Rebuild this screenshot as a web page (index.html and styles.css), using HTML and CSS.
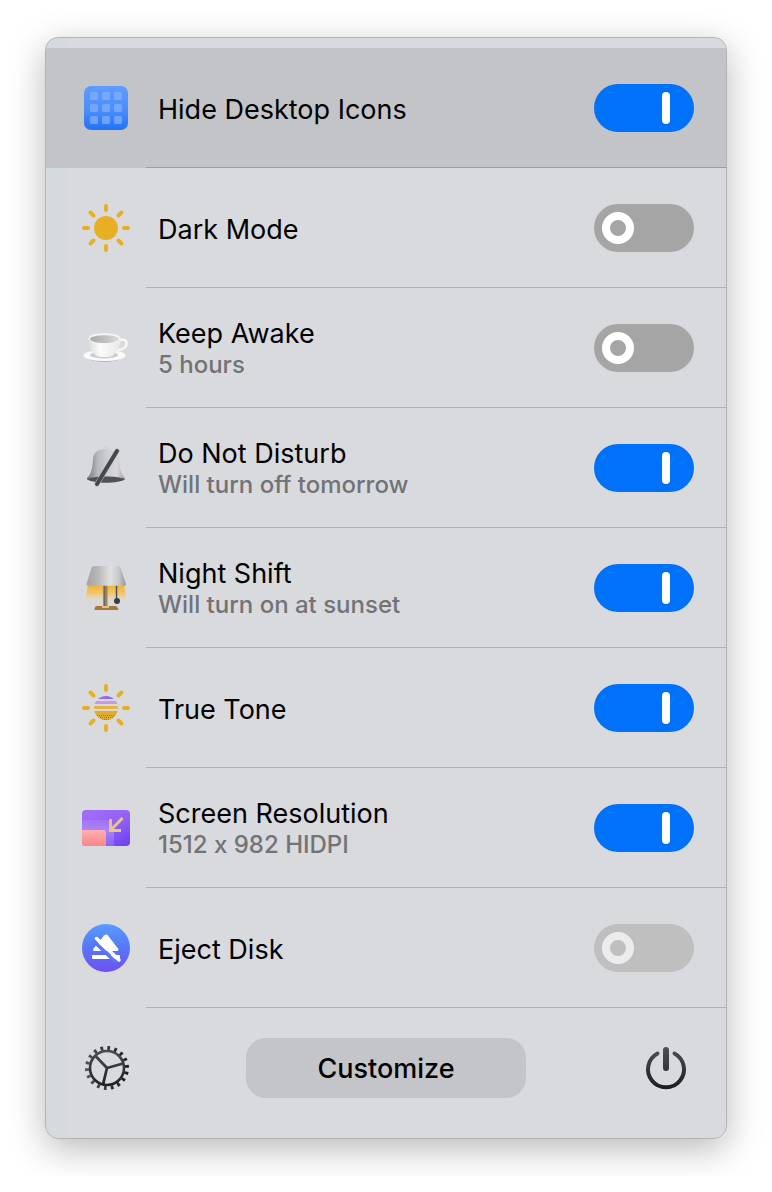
FILE: index.html
```html
<!DOCTYPE html>
<html lang="en">
<head>
  <meta charset="UTF-8" />
  <meta name="viewport" content="width=device-width, initial-scale=1.0"/>
  <title>Quick Switches</title>
  <link rel="stylesheet" href="styles.css">
</head>
<body>

<main class="panel">
  <ul class="switches">
    <li class="row active">
      <svg class="icon" viewBox="0 0 48 48" aria-hidden="true">
        <defs>
          <linearGradient id="desk" x1="0" y1="0" x2="0" y2="1"><stop offset="0" stop-color="#609cff"/><stop offset=".55" stop-color="#4a8dfb"/><stop offset="1" stop-color="#2273f5"/></linearGradient>
        </defs>
        <rect x="2" y="2" width="44" height="44" rx="7" fill="url(#desk)"/>
        <g fill="#82b1ff" opacity=".72">
          <rect x="8" y="8" width="8" height="8" rx="1.5"/><rect x="20" y="8" width="8" height="8" rx="1.5"/><rect x="32" y="8" width="8" height="8" rx="1.5"/>
          <rect x="8" y="20" width="8" height="8" rx="1.5"/><rect x="20" y="20" width="8" height="8" rx="1.5"/><rect x="32" y="20" width="8" height="8" rx="1.5"/>
          <rect x="8" y="32" width="8" height="8" rx="1.5"/><rect x="20" y="32" width="8" height="8" rx="1.5"/><rect x="32" y="32" width="8" height="8" rx="1.5"/>
        </g>
      </svg>
      <div class="row-body">
        <label class="text" for="desktop"><span class="title">Hide Desktop Icons</span></label>
        <input class="toggle" type="checkbox" id="desktop" checked>
      </div>
    </li>

    <li class="row">
      <svg class="icon" viewBox="0 0 48 48" aria-hidden="true">
        <circle cx="24" cy="24" r="12" fill="#e8af24"/>
        <path d="M24 2v4M24 42v4M2 24h4M42 24h4M8.5 8.5l3 3M36.5 36.5l3 3M39.5 8.5l-3 3M11.5 36.5l-3 3" stroke="#e8af24" stroke-width="4" stroke-linecap="round"/>
      </svg>
      <div class="row-body">
        <label class="text" for="dark"><span class="title">Dark Mode</span></label>
        <input class="toggle" type="checkbox" id="dark">
      </div>
    </li>

    <li class="row">
      <svg class="icon" viewBox="0 0 48 48" aria-hidden="true">
        <defs>
          <linearGradient id="cupin" x1="0" y1="0" x2="1" y2="0"><stop offset="0" stop-color="#a9a9a9"/><stop offset=".6" stop-color="#c4c4c4"/><stop offset="1" stop-color="#dedede"/></linearGradient>
          <linearGradient id="cupout" x1="0" y1="0" x2="1" y2="0"><stop offset="0" stop-color="#dcdcdc"/><stop offset=".35" stop-color="#fbfbfb"/><stop offset="1" stop-color="#e9e9e9"/></linearGradient>
        </defs>
        <ellipse cx="22.5" cy="33" rx="17" ry="5" fill="#b4b4b6"/>
        <ellipse cx="22.5" cy="31.5" rx="21" ry="5.5" fill="#fafafa"/>
        <ellipse cx="22" cy="31" rx="14" ry="3.5" fill="#cfcfd0"/>
        <path d="M37 17c4-3 8-1 7.500 3-.5 4-4.500 6-9 6" fill="none" stroke="#f8f8f8" stroke-width="2.5"/>
        <path d="M6.500 14c0 8 3 14 8 17.500 3 2 13 2 16 0 5-3.500 8-9.500 8-17.500z" fill="url(#cupout)"/>
        <ellipse cx="22.5" cy="14.5" rx="16" ry="5.5" fill="#f4f4f4"/>
        <path d="M8 15c1-5 28-5 29 0-1 3-7 4-14.500 4S9 18 8 15z" fill="url(#cupin)"/>
      </svg>
      <div class="row-body">
        <label class="text" for="awake"><span class="title">Keep Awake</span><span class="note">5 hours</span></label>
        <input class="toggle" type="checkbox" id="awake">
      </div>
    </li>

    <li class="row">
      <svg class="icon" viewBox="0 0 48 48" aria-hidden="true">
        <defs>
          <linearGradient id="bell" x1="0" y1="0" x2="1" y2="0"><stop offset="0" stop-color="#777"/><stop offset=".28" stop-color="#b5b8bd"/><stop offset=".55" stop-color="#cfd0d2"/><stop offset=".8" stop-color="#d8d8d8"/><stop offset="1" stop-color="#9a9a9a"/></linearGradient>
        </defs>
        <circle cx="24" cy="5" r="3" fill="#d4d4d6"/>
        <path d="M24 5c8 0 12 3 13 9.500.7 8 1 15 6 19.500v1.500H5V34c5-4.500 5.300-11.500 6-19.500C12 8 16 5 24 5z" fill="url(#bell)"/>
        <path d="M5 35c7-3.500 31-3.500 38 0-5 5-33 5-38 0z" fill="#505154"/>
        <path d="M35 7L15 40" stroke="#b9bbbe" stroke-width="5" stroke-linecap="round"/>
        <path d="M35 7L15 40" stroke="#45474a" stroke-width="4" stroke-linecap="round"/>
      </svg>
      <div class="row-body">
        <label class="text" for="dnd"><span class="title">Do Not Disturb</span><span class="note">Will turn off tomorrow</span></label>
        <input class="toggle" type="checkbox" id="dnd" checked>
      </div>
    </li>

    <li class="row">
      <svg class="icon" viewBox="0 0 48 48" aria-hidden="true">
        <defs>
          <linearGradient id="shade" x1="0" y1="0" x2="1" y2="0"><stop offset="0" stop-color="#a4a4a5"/><stop offset=".3" stop-color="#b8b8b9"/><stop offset=".6" stop-color="#e0e0e1"/><stop offset=".8" stop-color="#cbcbcc"/><stop offset="1" stop-color="#979798"/></linearGradient>
          <linearGradient id="glow" x1="0" y1="0" x2="0" y2="1"><stop offset="0" stop-color="#f0b234"/><stop offset=".5" stop-color="#f2c56b"/><stop offset="1" stop-color="#ebd6ad" stop-opacity=".15"/></linearGradient>
        </defs>
        <path d="M6 21h36l3 16H3z" fill="url(#glow)"/>
        <path d="M21.500 21h4v22h-4z" fill="#a77f46"/>
        <path d="M21.500 21h1.500v22h-1.500z" fill="#67686a"/>
        <path d="M15 42h18c2 0 3 2 3.500 4h-24c0-2 .5-4 2.500-4z" fill="#a57738"/>
        <path d="M20 42h7v2h-7z" fill="#e1c18d"/>
        <path d="M34.500 20v16" stroke="#4e5054" stroke-width="1.5"/>
        <circle cx="35" cy="37" r="3" fill="#3a3c40"/>
        <path d="M12 2h24c1.300 0 2.300.7 2.600 2L44 20q.4 1.700-1.500 1.700H6q-1.900 0-1.500-1.700L9.400 4c.4-1.300 1.300-2 2.600-2z" fill="url(#shade)"/>
      </svg>
      <div class="row-body">
        <label class="text" for="night"><span class="title">Night Shift</span><span class="note">Will turn on at sunset</span></label>
        <input class="toggle" type="checkbox" id="night" checked>
      </div>
    </li>

    <li class="row">
      <svg class="icon" viewBox="0 0 48 48" aria-hidden="true">
        <defs>
          <clipPath id="disc"><circle cx="24" cy="24" r="12"/></clipPath>
        </defs>
        <g clip-path="url(#disc)">
          <path d="M12 12h24v3H12z" fill="#9668e8"/>
          <path d="M12 17h24v3H12z" fill="#c49bea"/>
          <path d="M12 22h24v3H12z" fill="#eab441"/>
          <path d="M12 27h24v9H12z" fill="#e2ad2a"/>
          <path d="M15 31.500h18M16 33.500h16M18 35.500h12" stroke="#957939" stroke-width="1" stroke-dasharray="1 1"/>
        </g>
        <path d="M24 2v4M24 42v4M2 24h4M42 24h4M8.5 8.5l3 3M36.5 36.5l3 3M39.5 8.5l-3 3M11.5 36.5l-3 3" stroke="#e8af24" stroke-width="4" stroke-linecap="round"/>
      </svg>
      <div class="row-body">
        <label class="text" for="tone"><span class="title">True Tone</span></label>
        <input class="toggle" type="checkbox" id="tone" checked>
      </div>
    </li>

    <li class="row">
      <svg class="icon" viewBox="0 0 48 48" aria-hidden="true">
        <defs>
          <linearGradient id="screen" x1=".2" y1="0" x2="1" y2="1"><stop offset="0" stop-color="#a36bfa"/><stop offset=".5" stop-color="#9161f5"/><stop offset="1" stop-color="#6c3df0"/></linearGradient>
          <linearGradient id="haze" x1="0" y1="0" x2="0" y2="1"><stop offset="0" stop-color="#b18cf8" stop-opacity=".3"/><stop offset=".4" stop-color="#b18cf8" stop-opacity=".8"/><stop offset="1" stop-color="#9a78ee" stop-opacity=".5"/></linearGradient>
          <linearGradient id="pink" x1="0" y1="0" x2="0" y2="1"><stop offset="0" stop-color="#ffafb0"/><stop offset="1" stop-color="#fd8589"/></linearGradient>
        </defs>
        <rect y="6" width="48" height="36" rx="4" fill="url(#screen)"/>
        <path d="M0 16h24q8 1 8 10v16H4q-4 0-4-4z" fill="url(#haze)"/>
        <path d="M0 26h21q3 0 3 3v13H4q-4 0-4-4z" fill="url(#pink)"/>
        <path d="M28.500 15v11.500H39M29 26L40.500 14" fill="none" stroke="#e9c881" stroke-width="2.8"/>
      </svg>
      <div class="row-body">
        <label class="text" for="resolution"><span class="title">Screen Resolution</span><span class="note">1512 x 982 HIDPI</span></label>
        <input class="toggle" type="checkbox" id="resolution" checked>
      </div>
    </li>

    <li class="row">
      <svg class="icon" viewBox="0 0 48 48" aria-hidden="true">
        <defs>
          <linearGradient id="eject" x1="0" y1="0" x2="0" y2="1"><stop offset="0" stop-color="#589bff"/><stop offset=".5" stop-color="#5677f7"/><stop offset="1" stop-color="#6f4ff0"/></linearGradient>
        </defs>
        <circle cx="24" cy="24" r="24" fill="url(#eject)"/>
        <path d="M22.300 11.300q1.700-1.600 3.400 0L36 24.500q1 2.500-1 2.500H12.500q-2.500 0-1-2.500z" fill="#fff"/>
        <rect x="10" y="31" width="28" height="4" rx="1" fill="#fff"/>
        <path d="M11.500 17L34 38.500" stroke="#5876f7" stroke-width="3.5"/>
        <path d="M14.500 14.500L37 36" stroke="#fff" stroke-width="3.5" stroke-linecap="round"/>
      </svg>
      <div class="row-body">
        <label class="text" for="disk"><span class="title">Eject Disk</span></label>
        <input class="toggle" type="checkbox" id="disk" disabled>
      </div>
    </li>
  </ul>

  <footer class="footer">
    <button class="icon-button" type="button" aria-label="Settings">
      <svg class="icon" viewBox="0 0 48 48" aria-hidden="true">
        <defs>
          <linearGradient id="ink" gradientUnits="userSpaceOnUse" x1="0" y1="3" x2="0" y2="45"><stop offset="0" stop-color="#505154"/><stop offset="1" stop-color="#1b1c1e"/></linearGradient>
        </defs>
        <g fill="none" stroke="url(#ink)">
          <circle cx="25" cy="24" r="17" stroke-width="2.6"/>
          <!-- 18 teeth, one every 20 degrees -->
          <circle cx="25" cy="24" r="20" stroke-width="4" pathLength="180" stroke-dasharray="4 6" transform="rotate(-89 25 24)"/>
          <path d="M25 24L13.500 12M25 24l16-4.500M25 24l-4 16.500" stroke-width="2.8"/>
        </g>
      </svg>
    </button>
    <button class="customize" type="button">Customize</button>
    <button class="icon-button" type="button" aria-label="Quit">
      <svg class="icon" viewBox="0 0 48 48" aria-hidden="true">
        <g fill="none" stroke="url(#ink)" stroke-linecap="round">
          <path d="M15.500 9.500a18 18 0 1 0 17 0" stroke-width="4"/>
          <path d="M24 6L24.010 24" stroke-width="6"/>
        </g>
      </svg>
    </button>
  </footer>
</main>

</body>
</html>
```
FILE: styles.css
```css
*, *::before { box-sizing: border-box; margin: 0; padding: 0; font-family: Inter, 'Liberation Sans', sans-serif; }
body { background-color: #fff; color: #000; padding: 37px 45px; }
.panel { padding-top: 10px; border: 1px solid #b2b3b5; border-radius: 13px; background: linear-gradient(90deg, #d5dadd 22px, #d9dade 22px); box-shadow: 0 10px 36px rgba(0, 0, 0, 0.28); overflow: hidden; }

.switches { list-style: none; }
.row { display: flex; align-items: center; padding-left: 36px; height: 120px; }
.row.active { background-color: #c3c4c8; }
.icon { display: block; flex: none; width: 48px; height: 48px; }
.row-body { flex: 1; display: flex; align-items: center; justify-content: space-between; height: 100%; margin-left: 16px; padding: 0 32px 0 12px; border-bottom: 1px solid #b1b2b5; }
.row.active .row-body { border-bottom-color: #9d9ea2; }
.text { display: flex; flex-direction: column; padding-top: 4px; }
.title { font-size: 27px; line-height: 30px; }
.note { font-size: 24px; line-height: 32px; font-weight: 500; font-variant-ligatures: no-contextual; color: #727376; }

.toggle { appearance: none; display: flex; align-items: center; flex: none; width: 100px; height: 48px; padding: 0 8px; border-radius: 24px; background-color: #a5a5a5; cursor: pointer; }
.toggle::before { content: ''; width: 32px; height: 32px; border: 8px solid #fff; border-radius: 50%; }
.toggle:checked { justify-content: flex-end; padding-right: 24px; background-color: #0071f9; }
.toggle:checked::before { width: 8px; border: none; border-radius: 4px; background-color: #fff; }
.toggle:disabled { background-color: #bfbfbf; cursor: default; }
.toggle:disabled::before { border-color: #ebecee; }

.footer { display: flex; align-items: center; justify-content: space-between; height: 130px; padding: 0 36px 10px; }
.icon-button { border: none; background: none; cursor: pointer; }
.customize { width: 280px; height: 60px; padding-top: 2px; border: none; border-radius: 20px; background-color: #c4c5c9; font-size: 27px; line-height: 30px; font-weight: 500; cursor: pointer; }
```
